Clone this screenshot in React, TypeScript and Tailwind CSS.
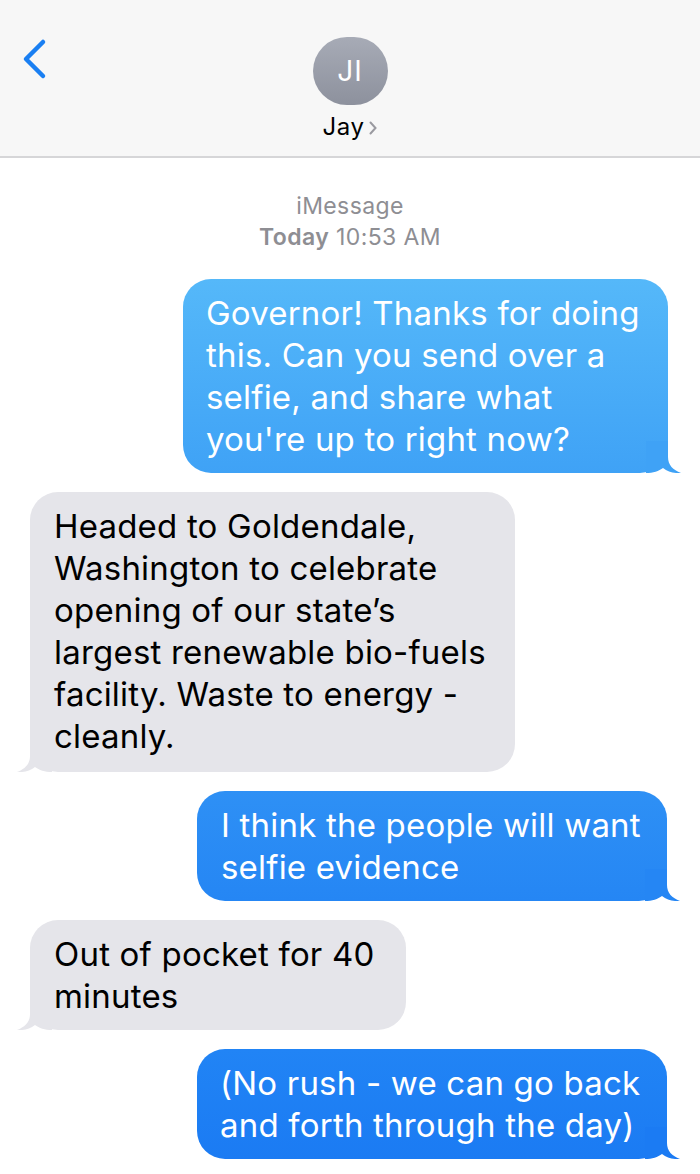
import React from "react";

const font = { fontFamily: 'Inter, "Liberation Sans", Arial, sans-serif' };

function RightTail({ color }: { color: string }) {
  return (
    <svg
      className="absolute right-[-14px] bottom-0"
      width="36"
      height="32"
      viewBox="0 0 36 32"
    >
      <path
        d="M22 0 L22 16 C22 24 27 29 35 32 C28 32.5 22 31 17 27 C13 30 7 32 0 32 L0 0 Z"
        fill={color}
      />
    </svg>
  );
}

function LeftTail({ color }: { color: string }) {
  return (
    <svg
      className="absolute left-[-14px] bottom-0"
      width="36"
      height="32"
      viewBox="0 0 36 32"
    >
      <path
        d="M14 0 L14 16 C14 24 9 29 1 32 C8 32.5 14 31 19 27 C23 30 29 32 36 32 L36 0 Z"
        fill={color}
      />
    </svg>
  );
}

function Lines({ lines }: { lines: string[] }) {
  return (
    <>
      {lines.map((l, i) => (
        <span key={i} className="block whitespace-nowrap">
          {l}
        </span>
      ))}
    </>
  );
}

export default function App() {
  return (
    <div className="w-[700px] h-[1174px] bg-white overflow-hidden" style={font}>
      {/* Header */}
      <div className="h-[158px] bg-[#f7f7f7] border-b-2 border-[#d6d6d8] flex items-start relative">
        <div className="absolute left-[20px] top-[38px]">
          <svg width="30" height="42" viewBox="0 0 30 42">
            <path
              d="M23 4 L6 21 L23 38"
              fill="none"
              stroke="#1a7ff2"
              strokeWidth="4.5"
              strokeLinecap="round"
              strokeLinejoin="round"
            />
          </svg>
        </div>
        <div className="w-full flex flex-col items-center pt-[37px]">
          <div className="w-[75px] h-[68px] rounded-full bg-linear-to-b from-[#a7abb6] to-[#8d919d] flex items-center justify-center">
            <span className="text-white text-[28px] leading-none tracking-[1px]">JI</span>
          </div>
          <div className="mt-[9px] flex items-center gap-[5px] text-[24px] leading-[26px] tracking-[0.5px] text-black">
            <span>Jay</span>
            <svg width="8" height="14" viewBox="0 0 8 14" className="mt-[2px]">
              <path d="M1.5 1.5 L6.5 7 L1.5 12.5" fill="none" stroke="#9a9aa0" strokeWidth="2" strokeLinecap="round" />
            </svg>
          </div>
        </div>
      </div>

      {/* Body */}
      <div className="flex flex-col pt-[33px]">
        <div className="text-center text-[23px] leading-[31px] tracking-[0.4px] text-[#8e8e93]">
          <div>iMessage</div>
          <div>
            <span className="font-semibold">Today</span> 10:53 AM
          </div>
        </div>

        <div className="mt-[26px] flex flex-col gap-[19px] text-[33px] leading-[42px] tracking-[0.2px]">
          {/* 1 */}
          <div className="flex justify-end pr-[32px]">
            <div className="relative w-[485px] rounded-[28px] px-[23px] py-[13px] text-white bg-linear-to-b from-[#55b8f9] to-[#3fa2f6]">
              <RightTail color="#3fa2f6" />
              <div className="relative">
                <Lines
                  lines={[
                    "Governor! Thanks for doing",
                    "this. Can you send over a",
                    "selfie, and share what",
                    "you're up to right now?",
                  ]}
                />
              </div>
            </div>
          </div>

          {/* 2 */}
          <div className="flex justify-start pl-[30px]">
            <div className="relative w-[485px] rounded-[28px] px-[24px] pt-[13px] pb-[15px] text-black bg-[#e5e5ea]">
              <LeftTail color="#e5e5ea" />
              <div className="relative">
                <Lines
                  lines={[
                    "Headed to Goldendale,",
                    "Washington to celebrate",
                    "opening of our state\u2019s",
                    "largest renewable bio-fuels",
                    "facility. Waste to energy -",
                    "cleanly.",
                  ]}
                />
              </div>
            </div>
          </div>

          {/* 3 */}
          <div className="flex justify-end pr-[33px]">
            <div className="relative w-[470px] rounded-[28px] px-[24px] py-[13px] text-white bg-linear-to-b from-[#2e90f5] to-[#2586f4]">
              <RightTail color="#2586f4" />
              <div className="relative">
                <Lines lines={["I think the people will want", "selfie evidence"]} />
              </div>
            </div>
          </div>

          {/* 4 */}
          <div className="flex justify-start pl-[30px]">
            <div className="relative w-[376px] rounded-[28px] px-[24px] py-[13px] text-black bg-[#e5e5ea]">
              <LeftTail color="#e5e5ea" />
              <div className="relative">
                <Lines lines={["Out of pocket for 40", "minutes"]} />
              </div>
            </div>
          </div>

          {/* 5 */}
          <div className="flex justify-end pr-[33px]">
            <div className="relative w-[470px] rounded-[28px] px-[23px] py-[13px] text-white bg-linear-to-b from-[#2184f5] to-[#1b7bf3]">
              <RightTail color="#1b7bf3" />
              <div className="relative">
                <Lines lines={["(No rush - we can go back", "and forth through the day)"]} />
              </div>
            </div>
          </div>
        </div>
      </div>
    </div>
  );
}
